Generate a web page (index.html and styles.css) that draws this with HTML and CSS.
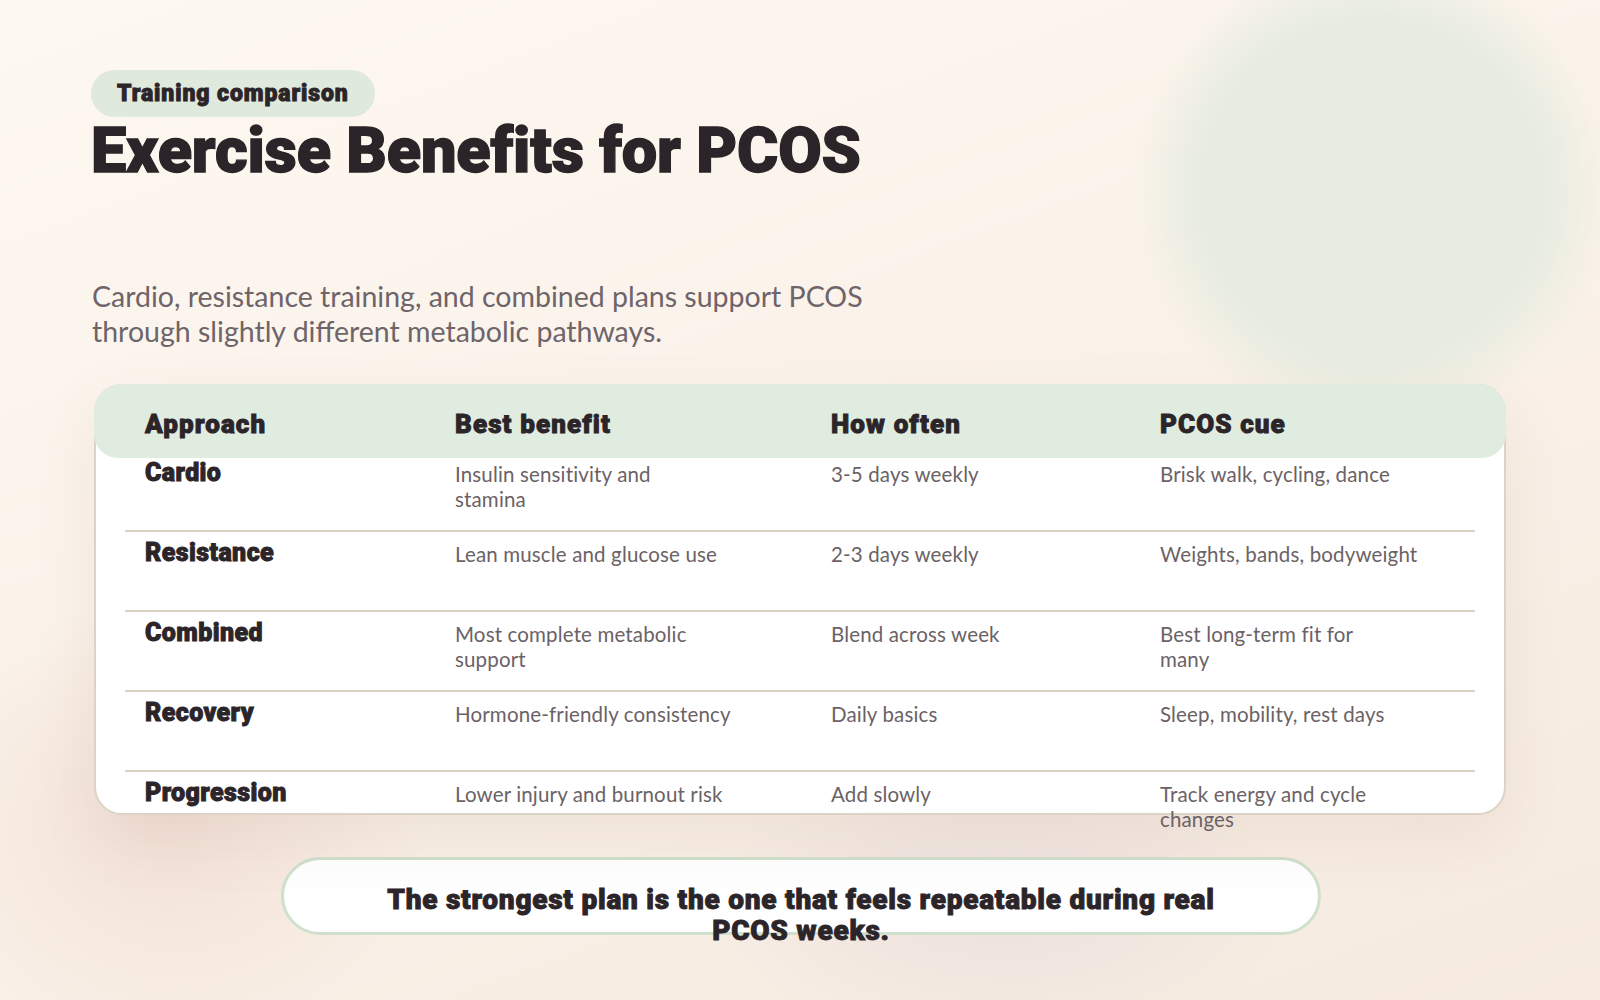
FILE: index.html
```html
<!DOCTYPE html>
<html lang="en">
<head>
<meta charset="utf-8">
<title>Exercise Benefits for PCOS</title>
<link rel="stylesheet" href="styles.css">
</head>
<body>
<main class="page">
  <header class="intro">
    <span class="badge">Training comparison</span>
    <h1 class="title">Exercise Benefits for PCOS</h1>
    <p class="lead">Cardio, resistance training, and combined plans support PCOS<br>through slightly different metabolic pathways.</p>
  </header>

  <section class="card">
    <div class="thead">
      <div class="row head-row">
        <div class="cell">Approach</div>
        <div class="cell">Best benefit</div>
        <div class="cell">How often</div>
        <div class="cell">PCOS cue</div>
      </div>
    </div>
    <div class="row">
      <div class="cell label">Cardio</div>
      <div class="cell">Insulin sensitivity and<br>stamina</div>
      <div class="cell">3-5 days weekly</div>
      <div class="cell">Brisk walk, cycling, dance</div>
    </div>
    <div class="row">
      <div class="cell label">Resistance</div>
      <div class="cell">Lean muscle and glucose use</div>
      <div class="cell">2-3 days weekly</div>
      <div class="cell">Weights, bands, bodyweight</div>
    </div>
    <div class="row">
      <div class="cell label">Combined</div>
      <div class="cell">Most complete metabolic<br>support</div>
      <div class="cell">Blend across week</div>
      <div class="cell">Best long-term fit for<br>many</div>
    </div>
    <div class="row">
      <div class="cell label">Recovery</div>
      <div class="cell">Hormone-friendly consistency</div>
      <div class="cell">Daily basics</div>
      <div class="cell">Sleep, mobility, rest days</div>
    </div>
    <div class="row">
      <div class="cell label">Progression</div>
      <div class="cell">Lower injury and burnout risk</div>
      <div class="cell">Add slowly</div>
      <div class="cell">Track energy and cycle<br>changes</div>
    </div>
  </section>

  <p class="callout">The strongest plan is the one that feels repeatable during real<br>PCOS weeks.</p>
</main>
</body>
</html>
```

FILE: styles.css
```css
* { box-sizing: border-box; }

html, body {
  margin: 0;
  padding: 0;
  height: 100%;
}

body {
  width: 1600px;
  height: 1000px;
  overflow: hidden;
  font-family: "Lato", "Noto Sans", sans-serif;
  color: #2b2429;
  background:
    radial-gradient(circle at 1372px 190px, #e6ece0 0, #e6ece0 170px, rgba(230,236,224,0) 240px),
    radial-gradient(ellipse 260px 220px at 170px 820px, rgba(241,222,212,0.9) 0, rgba(241,222,212,0) 100%),
    radial-gradient(ellipse 300px 140px at 1000px 900px, rgba(234,222,220,0.9) 0, rgba(234,222,220,0) 100%),
    linear-gradient(160deg, #fdf8f1 0%, #faf1e8 55%, #f6eadf 100%);
}

.badge,
.title,
.head-row .cell,
.cell.label,
.callout {
  font-family: "Roboto", "Inter", sans-serif;
  font-weight: 900;
  -webkit-text-stroke: 0.9px currentColor;
}

.page {
  padding: 70px 0 0 91px;
}

.intro {
  display: flex;
  flex-direction: column;
  align-items: flex-start;
}

.badge {
  display: inline-flex;
  align-items: center;
  height: 47px;
  padding: 0 26px;
  border-radius: 24px;
  background: #dfeadd;
  font-size: 23px;
  letter-spacing: 0.9px;
  color: #2b2429;
}

.title {
  margin: -2px 0 0 0;
  font-size: 63px;
  line-height: 72px;
  letter-spacing: -0.2px;
  color: #2b2429;
  -webkit-text-stroke: 1.3px currentColor;
}

.lead {
  margin: 92px 0 0 1px;
  font-size: 28.5px;
  line-height: 35px;
  color: #6e6469;
}

.card {
  position: relative;
  margin: 35px 0 0 3px;
  width: 1412px;
  height: 431px;
  background: #ffffff;
  border: 2px solid #dcd3c7;
  border-radius: 28px;
  box-shadow: 0 24px 60px rgba(150, 110, 90, 0.10);
}

.thead {
  margin: -2px -2px -6px;
  padding: 0 31px 6px;
  background: #e1ece0;
  border-radius: 28px 28px 24px 24px;
}

.row {
  display: grid;
  grid-template-columns: 310px 376px 329px 337px;
  margin: 0 29px;
  height: 80px;
  padding-top: 1px;
  border-bottom: 2px solid #dbd2c6;
  align-items: start;
}

.row:last-child {
  border-bottom: none;
}

.thead .head-row {
  margin: 0;
  height: 68px;
  padding-top: 28px;
  border-bottom-color: #d6cfc2;
}

.cell {
  padding: 9px 20px 0;
  font-size: 20.5px;
  line-height: 25px;
  letter-spacing: 0.15px;
  color: #6b6266;
}

.head-row .cell {
  padding-top: 0;
  font-size: 26px;
  line-height: 24px;
  letter-spacing: 1.1px;
  color: #2b2429;
}

.cell.label {
  padding-top: 6px;
  font-size: 25px;
  line-height: 28px;
  letter-spacing: 0.4px;
  color: #2b2429;
}

.callout {
  margin: 42px 0 0 190px;
  width: 1040px;
  height: 78px;
  padding: 24px 20px 0;
  background: #ffffff;
  border: 3px solid #cfe0cc;
  border-radius: 39px;
  text-align: center;
  font-size: 28px;
  line-height: 31px;
  letter-spacing: 0.75px;
  color: #2b2429;
}
```
